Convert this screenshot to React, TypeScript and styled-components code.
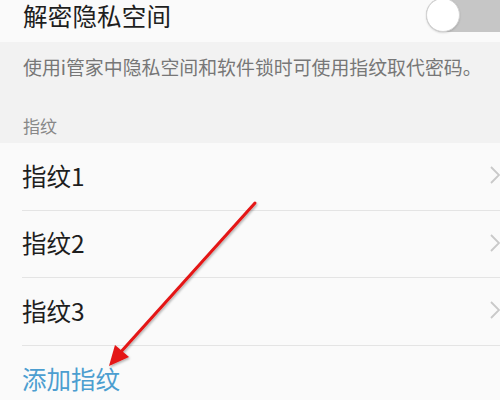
import React from 'react'
import styled, { createGlobalStyle } from 'styled-components'

const GlobalStyle = createGlobalStyle`
  html, body {
    margin: 0;
    padding: 0;
    background: #fafafa;
  }
  body {
    font-family: 'Noto Sans CJK SC', 'Noto Sans', sans-serif;
  }
`

const Screen = styled.div`
  position: relative;
  width: 500px;
  height: 400px;
  overflow: hidden;
  background: #fafafa;
`

const TopRow = styled.div`
  height: 42px;
  display: flex;
  align-items: flex-start;
  justify-content: space-between;
  padding-left: 23px;
  box-sizing: border-box;
`

const Title = styled.div`
  font-size: 24.5px;
  line-height: 32px;
  color: #1e1e1e;
  letter-spacing: 0.2px;
`

const Toggle = styled.div`
  position: relative;
  margin-top: -2px;
  margin-right: -18px;
  width: 92px;
  height: 34px;
  border-radius: 17px;
  background: #c6c6c6;
  flex-shrink: 0;
`

const Knob = styled.div`
  position: absolute;
  left: 0;
  top: 0;
  width: 34px;
  height: 34px;
  border-radius: 50%;
  background: #fff;
  box-sizing: border-box;
  border: 1px solid #d4d4d4;
  box-shadow: 0 1px 2px rgba(0, 0, 0, 0.15);
`

const Explain = styled.div`
  background: #f2f2f2;
  height: 101px;
  padding: 12px 0 0 23px;
  box-sizing: border-box;
  display: flex;
  flex-direction: column;
`

const Hint = styled.div`
  font-size: 18.9px;
  line-height: 26px;
  color: #777;
`

const SectionLabel = styled.div`
  margin-top: 34px;
  font-size: 17px;
  line-height: 24px;
  color: #888;
`

const List = styled.div`
  display: flex;
  flex-direction: column;
`

const Row = styled.div<{ $last?: boolean }>`
  height: 67.5px;
  margin-left: 22px;
  display: flex;
  align-items: center;
  justify-content: space-between;
  box-sizing: border-box;
  border-bottom: ${(p) => (p.$last ? 'none' : '1px solid #e4e4e4')};
`

const RowLabel = styled.div<{ $accent?: boolean }>`
  font-size: 24.5px;
  line-height: 30px;
  color: ${(p) => (p.$accent ? '#4c9ed0' : '#1e1e1e')};
  margin-top: ${(p) => (p.$accent ? '0' : '-1px')};
`

const Chevron = styled.svg`
  width: 12px;
  height: 20px;
  margin-right: -1px;
  margin-top: -2px;
`

const Arrow = styled.svg`
  position: absolute;
  left: 0;
  top: 0;
  pointer-events: none;
`

const prints = ['指纹1', '指纹2', '指纹3']

export default function App() {
  return (
    <Screen>
      <GlobalStyle />
      <TopRow>
        <Title>解密隐私空间</Title>
        <Toggle>
          <Knob />
        </Toggle>
      </TopRow>
      <Explain>
        <Hint>使用i管家中隐私空间和软件锁时可使用指纹取代密码。</Hint>
        <SectionLabel>指纹</SectionLabel>
      </Explain>
      <List>
        {prints.map((name) => (
          <Row key={name}>
            <RowLabel>{name}</RowLabel>
            <Chevron viewBox="0 0 12 20">
              <path
                d="M2 2 L10 10 L2 18"
                fill="none"
                stroke="#c9c9c9"
                strokeWidth="1.8"
              />
            </Chevron>
          </Row>
        ))}
        <Row $last>
          <RowLabel $accent>添加指纹</RowLabel>
        </Row>
      </List>
      <Arrow width="500" height="400" viewBox="0 0 500 400">
        <defs>
          <filter id="shade" x="-20%" y="-20%" width="140%" height="140%">
            <feDropShadow dx="1" dy="1.5" stdDeviation="1" floodColor="#000" floodOpacity="0.3" />
          </filter>
        </defs>
        <g filter="url(#shade)">
          <line x1="255" y1="203" x2="119" y2="354" stroke="#e41414" strokeWidth="3" strokeLinecap="round" />
          <polygon points="109,366 115,345 129,357" fill="#e41414" />
        </g>
      </Arrow>
    </Screen>
  )
}
